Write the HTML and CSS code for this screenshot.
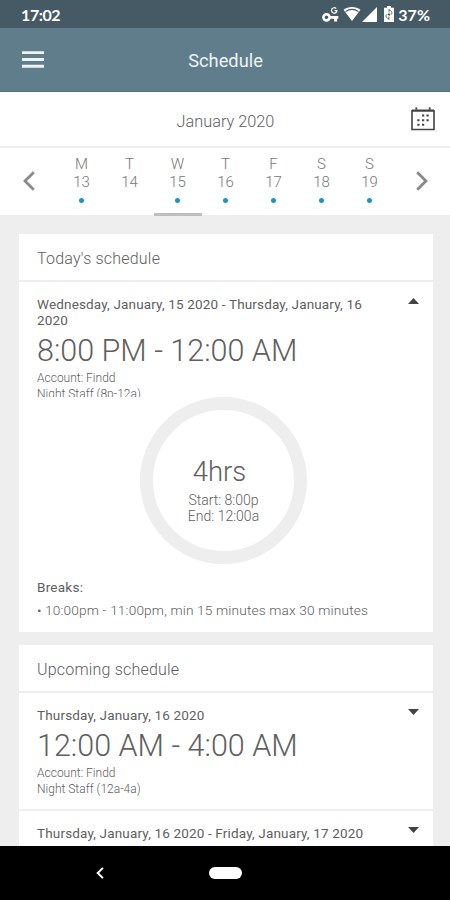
FILE: index.html
```html
<!DOCTYPE html>
<html lang="en">
<head>
  <meta charset="UTF-8" />
  <meta name="viewport" content="width=device-width, initial-scale=1.0"/>
  <title>Schedule</title>
  <link rel="stylesheet" href="styles.css">
</head>
<body>
  <!-- Status bar -->
  <div class="status-bar">
    <span class="clock">17:02</span>
    <div class="status-icons">
      <svg class="icon-key" width="17" height="17" viewBox="0 0 17 17">
        <circle cx="4.5" cy="11.3" r="3.1" fill="none" stroke="#fff" stroke-width="2.6"/>
        <path d="M7 9.9h9.3v2.9h-1.2v2.7h-3v-2.7H7z" fill="#fff"/>
        <path d="M14.2 2.6A2.7 2.7 0 1 0 14.9 4.6H12.6" fill="none" stroke="#fff" stroke-width="1.2"/>
      </svg>
      <svg class="icon-wifi" width="18" height="16" viewBox="0 0 18 16">
        <path d="M.5 3.8C5.5 0 12.5 0 17.5 3.8L9 15z" fill="#fff"/>
        <path d="M2.6 5.6C6.3 2.7 11.7 2.7 15.4 5.6" fill="none" stroke="#455a64" stroke-width="1.2"/>
      </svg>
      <svg class="icon-signal" width="15" height="15" viewBox="0 0 15 15">
        <path d="M15 0v15H0z" fill="#fff"/>
      </svg>
      <svg class="icon-battery" width="10" height="16" viewBox="0 0 10 16">
        <path d="M3 0h4v1.700h3V16H0V1.700h3z" fill="#fff"/>
        <path d="M5 4.200a2.800 2.800 0 0 1 2.500 4.300M5 12.600a2.800 2.800 0 0 1-2.500-4.300M5 2.800v3M5 11v3" fill="none" stroke="#455a64" stroke-width=".8"/>
        <path d="M5.600 5.800 3.400 9h1.400l-.4 2.300L6.700 8H5.200z" fill="#455a64"/>
      </svg>
      <span class="battery">37%</span>
    </div>
  </div>

  <!-- App bar -->
  <header class="app-bar">
    <svg class="menu-icon" width="22" height="17" viewBox="0 0 22 17">
      <path d="M0 1.600h22M0 8.500h22M0 15.200h22" stroke="#eef3f6" stroke-width="2.900"/>
    </svg>
    <h1>Schedule</h1>
  </header>

  <!-- Month -->
  <div class="month-bar">
    <span class="month">January 2020</span>
    <svg class="calendar-icon" width="24" height="24" viewBox="0 0 24 24">
      <path d="M1 3.800h22v18.700H1z" fill="none" stroke="#444" stroke-width="1.600"/>
      <path d="M1 3.500h22" stroke="#444" stroke-width="2"/>
      <path d="M5.300.3v3M18.700.3v3" stroke="#555" stroke-width="1.800"/>
      <path d="M11 8.500h2.200M15.500 8.500h2.200M6.300 13.200h2.200M11 13.200h2.200M15.500 13.200h2.200M6.300 17.800h2.200M11 17.800h2.200" stroke="#444" stroke-width="2"/>
    </svg>
  </div>

  <!-- Week -->
  <div class="week-bar">
    <svg class="arrow" width="12" height="20" viewBox="0 0 12 20">
      <path d="M10.800 1.200 2 10l8.800 8.800" fill="none" stroke="#8a8a8a" stroke-width="2.800"/>
    </svg>
    <div class="days">
      <div class="day"><span>M</span><span>13</span><i class="dot"></i></div>
      <div class="day"><span>T</span><span>14</span></div>
      <div class="day selected"><span>W</span><span>15</span><i class="dot"></i></div>
      <div class="day"><span>T</span><span>16</span><i class="dot"></i></div>
      <div class="day"><span>F</span><span>17</span><i class="dot"></i></div>
      <div class="day"><span>S</span><span>18</span><i class="dot"></i></div>
      <div class="day"><span>S</span><span>19</span><i class="dot"></i></div>
    </div>
    <svg class="arrow" width="12" height="20" viewBox="0 0 12 20">
      <path d="M1.200 1.200 10 10l-8.800 8.800" fill="none" stroke="#8a8a8a" stroke-width="2.800"/>
    </svg>
  </div>

  <!-- Main content -->
  <main class="content">
    <section class="card">
      <h2>Today's schedule</h2>
      <div class="shift open">
        <div class="shift-top">
          <p class="date">Wednesday, January, 15 2020 - Thursday, January, 16 2020</p>
          <svg class="caret" width="11" height="6" viewBox="0 0 11 6"><path d="M0 6 5.500 0 11 6z" fill="#444"/></svg>
        </div>
        <p class="hours">8:00 PM - 12:00 AM</p>
        <p class="note">Account: Findd<br>Night Staff (8p-12a)</p>
        <div class="ring">
          <span class="total">4hrs</span>
          <span class="range">Start: 8:00p</span>
          <span class="range">End: 12:00a</span>
        </div>
        <p class="breaks-title">Breaks:</p>
        <p class="breaks">• 10:00pm - 11:00pm, min 15 minutes max 30 minutes</p>
      </div>
    </section>

    <section class="card">
      <h2>Upcoming schedule</h2>
      <div class="shift">
        <div class="shift-top">
          <p class="date">Thursday, January, 16 2020</p>
          <svg class="caret" width="11" height="6" viewBox="0 0 11 6"><path d="M0 0h11L5.500 6z" fill="#444"/></svg>
        </div>
        <p class="hours">12:00 AM - 4:00 AM</p>
        <p class="note">Account: Findd<br>Night Staff (12a-4a)</p>
      </div>
      <div class="shift">
        <div class="shift-top">
          <p class="date">Thursday, January, 16 2020 - Friday, January, 17 2020</p>
          <svg class="caret" width="11" height="6" viewBox="0 0 11 6"><path d="M0 0h11L5.500 6z" fill="#444"/></svg>
        </div>
      </div>
    </section>
  </main>

  <!-- System navigation -->
  <nav class="nav-bar">
    <svg class="back" width="8" height="12" viewBox="0 0 8 12">
      <path d="M6.900.9 1.700 6l5.200 5.100" fill="none" stroke="#fff" stroke-width="2"/>
    </svg>
    <span class="home"></span>
  </nav>
</body>
</html>
```
FILE: styles.css
```css
* {
  box-sizing: border-box;
}

body {
  margin: 0;
  height: 900px;
  display: flex;
  flex-direction: column;
  overflow: hidden;
  font-family: Roboto, sans-serif;
  color: #606060;
  background-color: #eee;
}

h1, h2, p {
  margin: 0;
  font-weight: 400;
}

svg {
  display: block;
  flex: none;
}

.status-bar {
  flex: none;
  height: 28px;
  padding: 0 20px 0 21px;
  display: flex;
  align-items: center;
  justify-content: space-between;
  background: #455a64;
  color: #fff;
  font-family: Lato, sans-serif;
  font-weight: 700;
  font-size: 16px;
}

.clock {
  letter-spacing: -0.4px;
}

.status-icons {
  display: flex;
  align-items: center;
}

.icon-wifi {
  margin-left: 4px;
}

.icon-signal {
  margin-left: 1px;
}

.icon-battery {
  margin-left: 7px;
}

.battery {
  margin-left: 4px;
}

.app-bar {
  flex: none;
  height: 64px;
  padding: 0 21px 0 22px;
  display: grid;
  grid-template-columns: 22px 1fr 22px;
  align-items: center;
  background: #607d8b;
  border-bottom: 1px solid #547080;
}

.app-bar h1 {
  color: #eef3f6;
  font-size: 18.3px;
  line-height: 22px;
  padding-top: 3px;
  text-align: center;
}

.month-bar {
  flex: none;
  height: 56px;
  padding: 0 15px;
  display: grid;
  grid-template-columns: 24px 1fr 24px;
  align-items: center;
  background: #fff;
  border-bottom: 2px solid #eee;
}

.month {
  grid-column: 2;
  padding: 4px 0 0 1px;
  text-align: center;
  font-size: 16.3px;
  font-weight: 300;
}

.week-bar {
  flex: none;
  height: 68px;
  padding: 0 22px 0 23px;
  display: flex;
  justify-content: space-between;
  background: linear-gradient(#fff 67px, #eee 67px);
}

.arrow {
  margin-top: 23px;
}

.days {
  display: flex;
}

.day {
  width: 48px;
  padding-top: 7px;
  display: flex;
  flex-direction: column;
  align-items: center;
  font-size: 15px;
  line-height: 18px;
  font-weight: 300;
  color: #777;
}

.selected {
  border-bottom: 3px solid #bdbdbd;
}

.dot {
  width: 5px;
  height: 5px;
  margin-top: 7px;
  border-radius: 50%;
  background: #1e90d6;
}

.content {
  flex: 1;
  min-height: 0;
  overflow: hidden;
  padding: 18px 17px 0 19px;
}

.card {
  margin-bottom: 13px;
  background: #fff;
}

.card h2 {
  height: 48px;
  padding-left: 18px;
  border-bottom: 2px solid #eee;
  font-size: 16px;
  line-height: 49px;
  font-weight: 300;
  letter-spacing: 0.2px;
}

.shift {
  height: 118px;
  padding: 14px 14px 0 18px;
  border-bottom: 2px solid #eee;
}

.open {
  height: 350px;
  border-bottom: none;
}

.shift-top {
  display: flex;
  justify-content: space-between;
}

.date {
  max-width: 345px;
  font-size: 13.5px;
  line-height: 16px;
  letter-spacing: 0.16px;
}

.caret {
  margin-top: 2px;
}

.hours {
  margin-top: 5px;
  font-size: 30.5px;
  line-height: 36px;
  font-weight: 300;
}

.note {
  margin-top: 1px;
  font-size: 12px;
  line-height: 16px;
  font-weight: 300;
}

/* the opened shift cuts its note short above the ring */
.open .note {
  height: 27px;
  overflow: hidden;
}

.ring {
  width: 167px;
  height: 167px;
  margin: 0 0 0 103px;
  padding-top: 45px;
  border: 13px solid #eee;
  border-radius: 50%;
  display: flex;
  flex-direction: column;
  align-items: center;
}

.total {
  margin: 0 8px 4px 0;
  font-size: 27.5px;
  line-height: 33px;
  font-weight: 300;
}

.range {
  font-size: 14px;
  line-height: 16px;
  font-weight: 300;
}

.breaks-title {
  margin-top: 15px;
  font-size: 13.5px;
  line-height: 17px;
  letter-spacing: 0.25px;
}

.breaks {
  margin-top: 6px;
  font-size: 13.7px;
  line-height: 17px;
  font-weight: 300;
  letter-spacing: 0.15px;
}

.nav-bar {
  flex: none;
  height: 54px;
  display: grid;
  grid-template-columns: 200px 50px 200px;
  align-items: center;
  justify-items: center;
  background: #000;
}

.home {
  width: 33px;
  height: 12px;
  border-radius: 6px;
  background: #fff;
}
```
